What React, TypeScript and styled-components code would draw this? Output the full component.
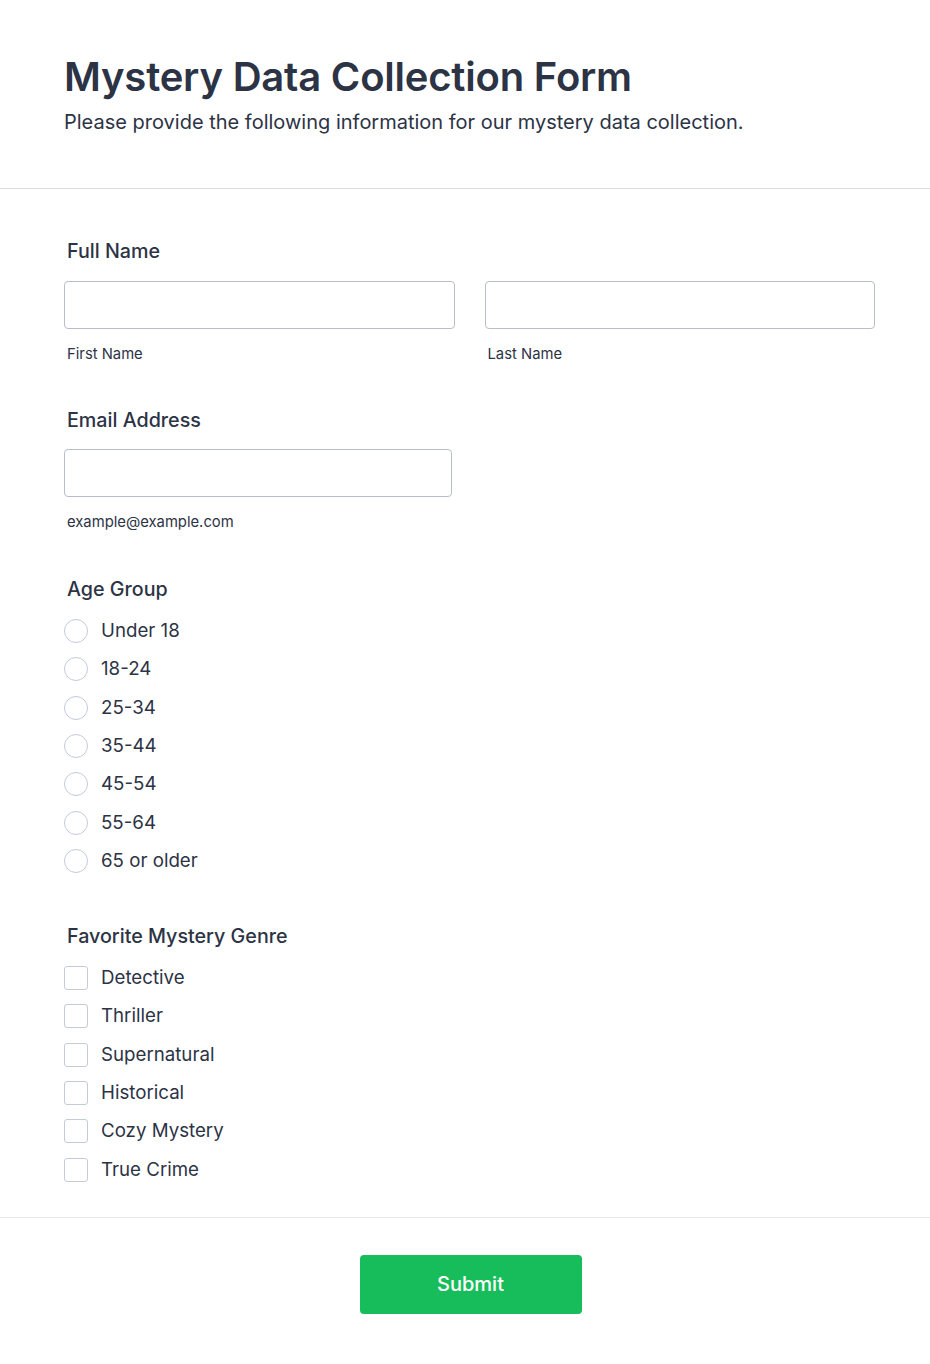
import React from "react";
import styled, { createGlobalStyle } from "styled-components";

const Global = createGlobalStyle`
  html, body { margin: 0; padding: 0; background: #ffffff; }
  body { font-family: Inter, "Noto Sans", "Liberation Sans", sans-serif; color: #2c3345; }
  * { box-sizing: border-box; }
`;

const Page = styled.div`
  width: 930px;
  background: #ffffff;
`;

const Header = styled.header`
  padding: 53px 64px 54px;
  border-bottom: 1px solid #d9dce4;
`;

const Title = styled.h1`
  margin: 0;
  font-size: 40px;
  line-height: 48px;
  font-weight: 600;
  letter-spacing: -0.2px;
  color: #2c3345;
`;

const Subtitle = styled.p`
  margin: 9px 0 0;
  font-size: 20px;
  line-height: 24px;
  font-weight: 400;
  color: #2c3345;
`;

const Body = styled.div`
  padding: 50px 55px 35px 64px;
  display: flex;
  flex-direction: column;
  border-bottom: 1px solid #e6e8ee;
`;

const Section = styled.section<{ $gapAfter: number }>`
  display: flex;
  flex-direction: column;
  margin-bottom: ${(p) => p.$gapAfter}px;
`;

const Label = styled.div<{ $gap?: number }>`
  font-size: 19.7px;
  line-height: 24px;
  font-weight: 500;
  padding-left: 3px;
  margin-bottom: ${(p) => p.$gap ?? 18}px;
  color: #2c3345;
`;

const NameGrid = styled.div`
  display: grid;
  grid-template-columns: 1fr 1fr;
  column-gap: 30px;
`;

const Field = styled.div<{ $width?: number }>`
  display: flex;
  flex-direction: column;
  width: ${(p) => (p.$width ? `${p.$width}px` : "auto")};
`;

const Input = styled.input`
  height: 48px;
  width: 100%;
  border: 1px solid #b8bdc9;
  border-radius: 4px;
  background: #ffffff;
  padding: 0 12px;
  font-family: inherit;
  font-size: 16px;
  outline: none;
`;

const SubLabel = styled.div`
  margin-top: 16px;
  font-size: 14.8px;
  line-height: 18px;
  padding-left: 3px;
  color: #2c3345;
`;

const OptionList = styled.div`
  display: flex;
  flex-direction: column;
  gap: 14.33px;
`;

const Option = styled.label`
  display: flex;
  align-items: center;
  gap: 13px;
  height: 24px;
  font-size: 18.7px;
  line-height: 24px;
  color: #2c3345;
  cursor: pointer;
`;

const Radio = styled.span`
  width: 24px;
  height: 24px;
  border: 1px solid #c3cad8;
  border-radius: 50%;
  background: #ffffff;
  flex: none;
`;

const Check = styled.span`
  width: 24px;
  height: 24px;
  border: 1px solid #c3cad8;
  border-radius: 3px;
  background: #ffffff;
  flex: none;
`;

const Footer = styled.div`
  display: flex;
  justify-content: center;
  padding: 37px 55px 50px 64px;
`;

const SubmitButton = styled.button`
  width: 222px;
  height: 59px;
  border: none;
  border-radius: 4px;
  background: #18bd5b;
  color: #ffffff;
  font-family: inherit;
  font-size: 20px;
  font-weight: 500;
  cursor: pointer;
  margin-left: 2px;
`;

const ages = ["Under 18", "18-24", "25-34", "35-44", "45-54", "55-64", "65 or older"];
const genres = ["Detective", "Thriller", "Supernatural", "Historical", "Cozy Mystery", "True Crime"];

export default function App() {
  return (
    <Page>
      <Global />
      <Header>
        <Title>Mystery Data Collection Form</Title>
        <Subtitle>Please provide the following information for our mystery data collection.</Subtitle>
      </Header>
      <Body>
        <Section $gapAfter={45}>
          <Label>Full Name</Label>
          <NameGrid>
            <Field>
              <Input />
              <SubLabel>First Name</SubLabel>
            </Field>
            <Field>
              <Input />
              <SubLabel>Last Name</SubLabel>
            </Field>
          </NameGrid>
        </Section>
        <Section $gapAfter={46}>
          <Label $gap={17}>Email Address</Label>
          <Field $width={388}>
            <Input type="email" />
            <SubLabel>example@example.com</SubLabel>
          </Field>
        </Section>
        <Section $gapAfter={51}>
          <Label>Age Group</Label>
          <OptionList>
            {ages.map((a) => (
              <Option key={a}>
                <Radio />
                {a}
              </Option>
            ))}
          </OptionList>
        </Section>
        <Section $gapAfter={0}>
          <Label>Favorite Mystery Genre</Label>
          <OptionList>
            {genres.map((g) => (
              <Option key={g}>
                <Check />
                {g}
              </Option>
            ))}
          </OptionList>
        </Section>
      </Body>
      <Footer>
        <SubmitButton>Submit</SubmitButton>
      </Footer>
    </Page>
  );
}
